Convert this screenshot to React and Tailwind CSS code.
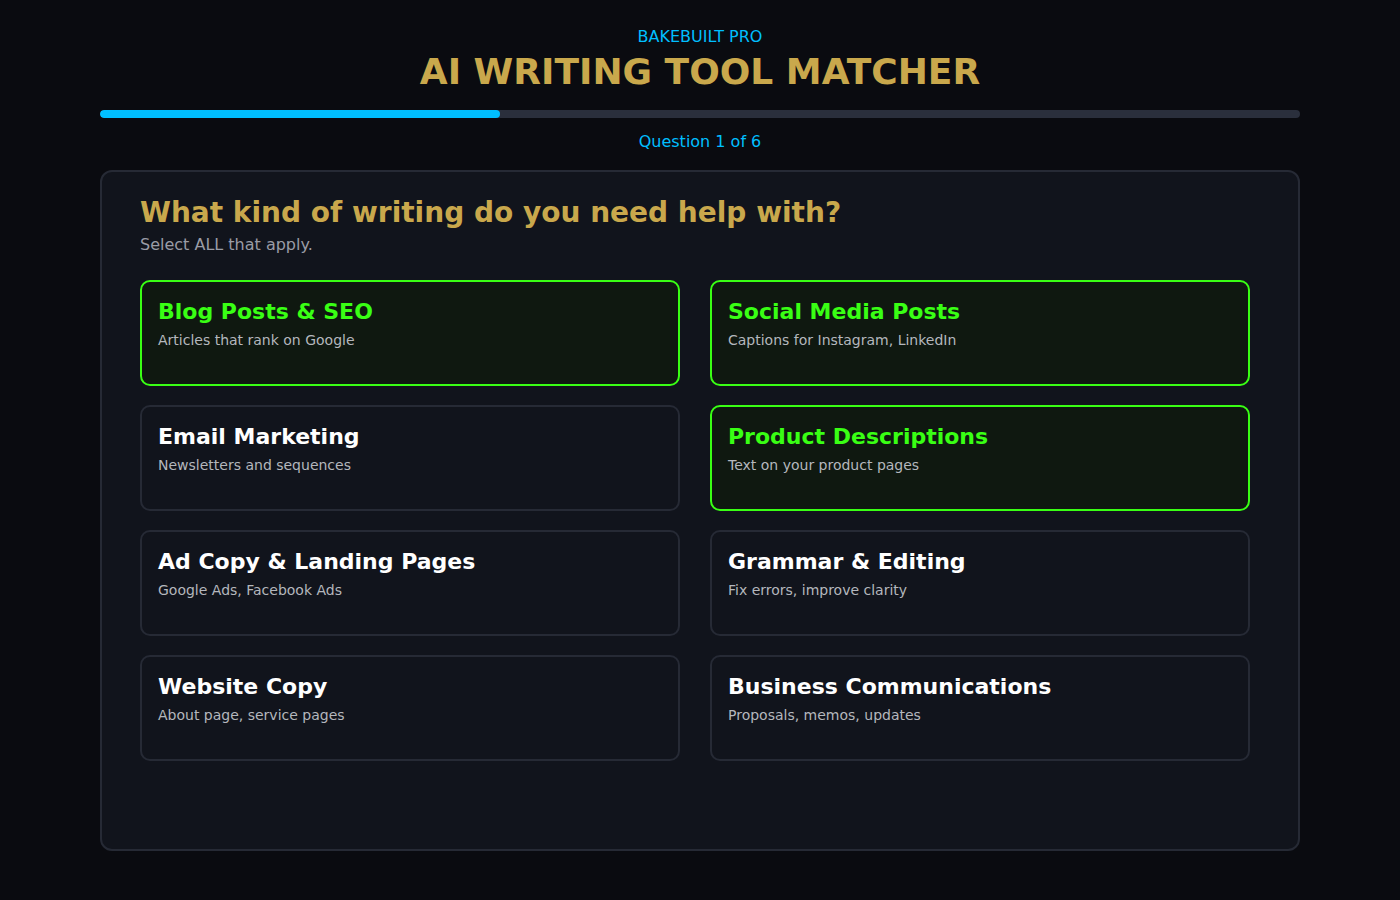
import React, { useState } from 'react';

const OPTIONS = [
  { id: 'blog', title: 'Blog Posts & SEO', desc: 'Articles that rank on Google' },
  { id: 'social', title: 'Social Media Posts', desc: 'Captions for Instagram, LinkedIn' },
  { id: 'email', title: 'Email Marketing', desc: 'Newsletters and sequences' },
  { id: 'product', title: 'Product Descriptions', desc: 'Text on your product pages' },
  { id: 'ads', title: 'Ad Copy & Landing Pages', desc: 'Google Ads, Facebook Ads' },
  { id: 'grammar', title: 'Grammar & Editing', desc: 'Fix errors, improve clarity' },
  { id: 'website', title: 'Website Copy', desc: 'About page, service pages' },
  { id: 'business', title: 'Business Communications', desc: 'Proposals, memos, updates' },
];

export default function App() {
  const [selected, setSelected] = useState(['blog', 'social', 'product']);

  const toggle = (id) =>
    setSelected((s) => (s.includes(id) ? s.filter((x) => x !== id) : [...s, id]));

  return (
    <div className="min-h-[900px] bg-[#0a0b10] font-['DejaVu_Sans',sans-serif]">
      <div className="w-[1200px] mx-auto pt-[27px]">
        {/* Header */}
        <div className="text-center">
          <p className="text-[16px] leading-[20px] text-[#00bfff]">BAKEBUILT PRO</p>
          <h1 className="mt-[5px] text-[36px] leading-[40px] font-bold text-[#c9a84c]">
            AI WRITING TOOL MATCHER
          </h1>
        </div>

        {/* Progress */}
        <div className="mt-[18px] h-[8px] rounded-full bg-[#2a2f3c] overflow-hidden">
          <div className="h-full w-1/3 rounded-full bg-[#00bfff]" />
        </div>
        <p className="mt-[14px] text-center text-[16px] leading-[20px] text-[#00bfff]">Question 1 of 6</p>

        {/* Question card */}
        <div className="mt-[18px] h-[681px] rounded-[12px] border-2 border-[#262a35] bg-[#11141c] px-[38px] pt-[23px]">
          <h2 className="text-[28px] leading-[36px] font-bold text-[#c9a84c]">
            What kind of writing do you need help with?
          </h2>
          <p className="mt-[4px] text-[16px] leading-[20px] text-[#9a9ca6]">Select ALL that apply.</p>

          <div className="mt-[25px] w-[1110px] grid grid-cols-2 gap-x-[30px] gap-y-[19px]">
            {OPTIONS.map((o) => {
              const on = selected.includes(o.id);
              return (
                <button
                  key={o.id}
                  onClick={() => toggle(o.id)}
                  className={
                    'h-[106px] rounded-[10px] border-2 px-[16px] pt-[16px] text-left flex flex-col items-start ' +
                    (on ? 'border-[#39ff14] bg-[#0f1810]' : 'border-[#262a35] bg-[#11141c]')
                  }
                >
                  <span
                    className={
                      'text-[22px] leading-[28px] font-bold ' + (on ? 'text-[#39ff14]' : 'text-white')
                    }
                  >
                    {o.title}
                  </span>
                  <span className="mt-[5px] text-[14px] leading-[18px] text-[#b4b7bd]">{o.desc}</span>
                </button>
              );
            })}
          </div>
        </div>
      </div>
    </div>
  );
}
